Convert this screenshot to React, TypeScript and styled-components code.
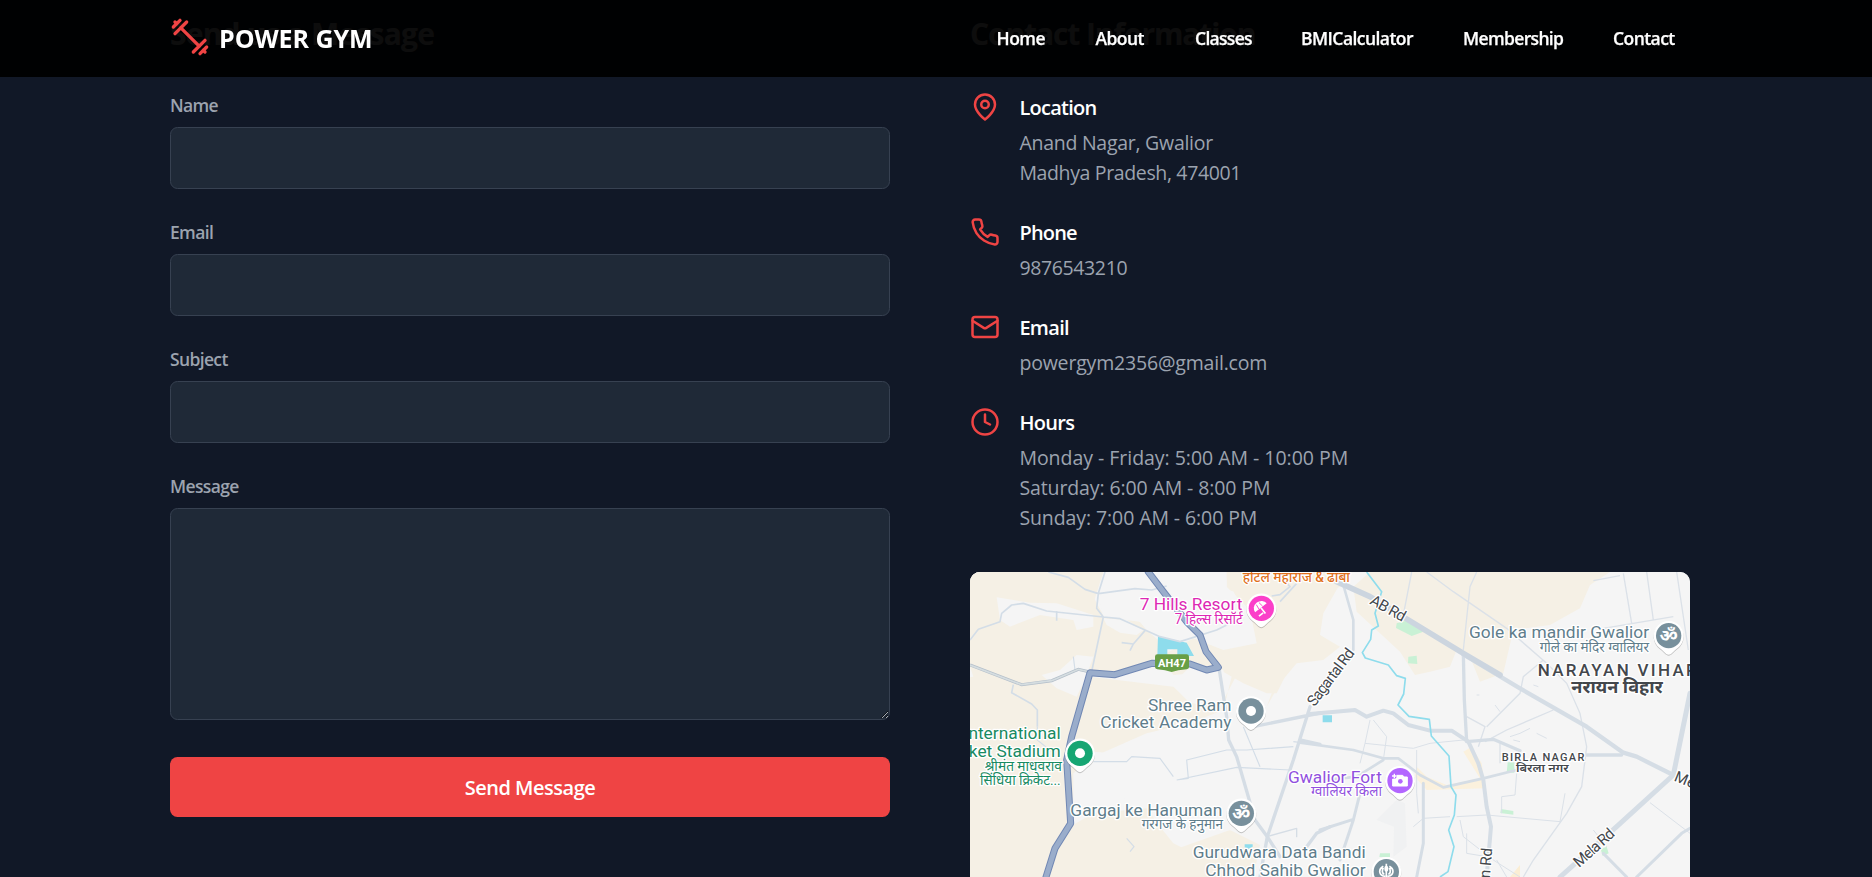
import React from 'react';
import styled, { createGlobalStyle } from 'styled-components';

const GlobalStyle = createGlobalStyle`
  *, *::before, *::after { box-sizing: border-box; }
  html, body { margin: 0; padding: 0; background: #111827; }
  body { font-family: "Segoe UI", "Open Sans", "Noto Sans", sans-serif; font-size: 20px; line-height: 30px; color: #fff; }
  h2, h3, p { margin: 0; }
`;

const Page = styled.div`
  width: 1860px;
  height: 877px;
  overflow: hidden;
`;

const Header = styled.header`
  position: fixed;
  top: 0;
  left: 0;
  right: 0;
  z-index: 10;
  height: 77px;
  background: rgba(0, 0, 0, 0.95);
`;

const HeaderInner = styled.div`
  width: 1506px;
  height: 100%;
  margin-left: 170px;
  display: flex;
  align-items: center;
  justify-content: space-between;
`;

const Logo = styled.div`
  display: flex;
  align-items: center;
  gap: 9px;
  padding-bottom: 2px;
  font-size: 25px;
  font-weight: 700;
  letter-spacing: -0.05px;
  color: #fff;

  svg { margin-bottom: 1px; }
`;

const Nav = styled.nav`
  display: flex;
  gap: 50px;
`;

const NavLink = styled.a<{ $width: number; $track: number }>`
  width: ${(p) => p.$width}px;
  letter-spacing: ${(p) => p.$track}px;
  font-size: 17.5px;
  line-height: 25px;
  font-weight: 600;
  color: #fff;
  white-space: nowrap;
  -webkit-text-stroke: 0.25px #fff;
`;

const Main = styled.main`
  width: 1520px;
  margin: 0 auto;
  padding-top: 12px;
  display: grid;
  grid-template-columns: 720px 720px;
  gap: 80px;
  justify-content: start;
`;

const Section = styled.section`
  display: flex;
  flex-direction: column;
`;

const Heading = styled.h2<{ $track: number }>`
  padding-top: 2px;
  margin-bottom: 38px;
  font-size: 30px;
  line-height: 40px;
  font-weight: 700;
  letter-spacing: ${(p) => p.$track}px;
`;

const Form = styled.form`
  display: flex;
  flex-direction: column;
  gap: 30px;
`;

const Field = styled.div`
  display: flex;
  flex-direction: column;
  gap: 9px;
`;

const Label = styled.label`
  padding-top: 1px;
  font-size: 17.5px;
  line-height: 25px;
  font-weight: 600;
  letter-spacing: -0.65px;
  color: #9ca3af;
`;

const Input = styled.input`
  height: 62px;
  padding: 15px 20px;
  border: 1px solid #374151;
  border-radius: 7.5px;
  background: #1f2937;
  color: #fff;
  font: inherit;
  outline: none;
`;

const TextArea = styled.textarea`
  height: 212px;
  margin-bottom: 7px;
  padding: 15px 20px;
  border: 1px solid #374151;
  border-radius: 7.5px;
  background: #1f2937;
  color: #fff;
  font: inherit;
  outline: none;
  resize: vertical;
`;

const SubmitButton = styled.button`
  height: 60px;
  padding: 2px 0 0;
  border: 0;
  border-radius: 7.5px;
  background: #ef4444;
  color: #fff;
  font: inherit;
  font-weight: 600;
  letter-spacing: -0.5px;
`;

const InfoList = styled.div`
  display: flex;
  flex-direction: column;
  gap: 30px;
  margin-bottom: 40px;
`;

const InfoItem = styled.div`
  display: flex;
  align-items: flex-start;
  gap: 19.4px;
`;

const InfoText = styled.div`
  padding-top: 1px;
  margin-bottom: -1px;
`;

const InfoIcon = styled.svg`
  width: 30px;
  height: 30px;
  flex: none;
  fill: none;
  stroke: #ef4444;
  stroke-width: 2;
  stroke-linecap: round;
  stroke-linejoin: round;
`;

const InfoTitle = styled.h3<{ $track: number }>`
  margin-bottom: 5px;
  font-size: 20px;
  line-height: 30px;
  font-weight: 600;
  letter-spacing: ${(p) => p.$track}px;
`;

const InfoLine = styled.p<{ $track: number }>`
  font-size: 19.5px;
  line-height: 30px;
  letter-spacing: ${(p) => p.$track}px;
  color: #9ca3af;
  white-space: nowrap;
`;

const MapFrame = styled.div`
  height: 305px;
  border-radius: 10px 10px 0 0;
  overflow: hidden;
  background: #f5f5f5;

  svg { display: block; }
  text { font-family: Roboto, "Noto Sans Devanagari", "Noto Sans", sans-serif; }
`;

const MapLabel = styled.text<{ $size?: number; $weight?: number }>`
  font-size: ${(p) => p.$size ?? 52}px;
  font-weight: ${(p) => p.$weight ?? 400};
  paint-order: stroke;
  stroke: #fff;
  stroke-width: 8px;
  stroke-linejoin: round;
  text-anchor: end;
`;

const navItems = [
  { text: 'Home', width: 49, track: -0.5 },
  { text: 'About', width: 49.5, track: -0.55 },
  { text: 'Classes', width: 56, track: -0.7 },
  { text: 'BMICalculator', width: 112, track: -0.55 },
  { text: 'Membership', width: 100, track: -0.65 },
  { text: 'Contact', width: 63, track: -0.55 },
];

type Info = {
  title: string;
  track: number;
  icon: React.ReactNode;
  lines: [string, number][];
};

const infos: Info[] = [
  {
    title: 'Location',
    track: -0.75,
    icon: (
      <>
        <path d="M20 10c0 6-8 12-8 12s-8-6-8-12a8 8 0 0 1 16 0Z" />
        <circle cx="12" cy="10" r="3" />
      </>
    ),
    lines: [['Anand Nagar, Gwalior', -0.26], ['Madhya Pradesh, 474001', -0.36]],
  },
  {
    title: 'Phone',
    track: -0.8,
    icon: (
      <path d="M22 16.92v3a2 2 0 0 1-2.18 2 19.79 19.79 0 0 1-8.63-3.07 19.5 19.5 0 0 1-6-6 19.79 19.79 0 0 1-3.07-8.67A2 2 0 0 1 4.11 2h3a2 2 0 0 1 2 1.72 12.84 12.84 0 0 0 .7 2.81 2 2 0 0 1-.45 2.11L8.09 9.91a16 16 0 0 0 6 6l1.27-1.27a2 2 0 0 1 2.11-.45 12.84 12.84 0 0 0 2.81.7A2 2 0 0 1 22 16.92z" />
    ),
    lines: [['9876543210', -0.37]],
  },
  {
    title: 'Email',
    track: -0.7,
    icon: (
      <>
        <rect width="20" height="16" x="2" y="4" rx="2" />
        <path d="m22 7-8.97 5.7a1.94 1.94 0 0 1-2.06 0L2 7" />
      </>
    ),
    lines: [['powergym2356@gmail.com', -0.18]],
  },
  {
    title: 'Hours',
    track: -0.7,
    icon: (
      <>
        <circle cx="12" cy="12" r="10" />
        <polyline points="12 6 12 12 16 14" />
      </>
    ),
    lines: [
      ['Monday - Friday: 5:00 AM - 10:00 PM', -0.03],
      ['Saturday: 6:00 AM - 8:00 PM', -0.11],
      ['Sunday: 7:00 AM - 6:00 PM', -0.09],
    ],
  },
];

function DumbbellIcon() {
  return (
    <svg width="40" height="40" viewBox="0 0 24 24" fill="none" stroke="#ef4444" strokeWidth="2" strokeLinecap="round" strokeLinejoin="round">
      <path d="m6.5 6.5 11 11" />
      <path d="m21 21-1-1" />
      <path d="m3 3 1 1" />
      <path d="m18 22 4-4" />
      <path d="m2 6 4-4" />
      <path d="m3 10 7-7" />
      <path d="m14 21 7-7" />
    </svg>
  );
}

function Pin({ x, y, color, children }: { x: number; y: number; color: string; children?: React.ReactNode }) {
  const shape = 'M0 57C-8 57-14 46-28 36A45 45 0 1 1 28 36C14 46 8 57 0 57Z';
  return (
    <g transform={`translate(${x} ${y})`}>
      <path d={shape} transform="translate(0 3)" fill="#000" opacity="0.22" />
      <path d={shape} fill="#fff" />
      <circle r="38" fill={color} />
      {children ?? <circle r="15" fill="#fff" />}
    </g>
  );
}

const Om = () => (
  <text y="19" fontSize="54" fontWeight="700" fill="#fff" textAnchor="middle">ॐ</text>
);

function CityMap() {
  const highway = 'M565 36 610 95 680 185 720 225 738 275 775 322 740 330 690 312 575 310 465 344 390 338 335 530 320 600 332 790 285 865 258 951';
  return (
    <svg width="720" height="305" viewBox="30 36 2160 915">
      <rect x="30" y="36" width="2160" height="915" fill="#f5f5f5" />

      {/* terrain */}
      <g fill="#f5f0e5">
        <path d="M30 36H420L385 75 410 130 430 165 530 175 560 210 600 245 590 290 470 330 400 330 380 345 250 345 290 375 380 380 350 530 400 575 440 578 500 545 600 510 690 490 790 450 820 330 640 345 600 290 690 240 790 190 880 180 850 100 800 90 800 36H1160L1090 160 1080 225 1140 260 1090 300 1010 310 960 370 935 400 920 440 960 370 830 345 780 440 690 430 640 380 500 420 400 570 350 640 330 800 400 760 560 745 600 800 640 850 700 880 770 951H30Z" />
        <path d="M30 36H430L400 130 340 100 320 180 200 150 120 175 30 240Z" />
        <path d="M430 170 520 190 590 250 580 300 460 340 400 330Z" />
        <path d="M790 36H1160V70L1080 110 1060 165 1080 225 1130 260 1085 300 1000 300 950 400 920 400 850 370 780 330 790 270 890 260 860 170Z" />
        <path d="M390 350 640 380 690 430 770 440 700 485 560 520 440 575 380 570 330 600Z" />
        <path d="M810 810 900 855 880 951H690L640 870Z" />
      </g>
      <g fill="#f5f5f5">
        <path d="M110 112 210 128 290 130 400 165 400 200 350 210 340 180 240 165 150 200 120 180Z" />
        <path d="M430 175 500 180 550 210 530 225 480 218 440 195Z" />
        <path d="M245 345 300 330 350 285 400 290 380 345 350 410 290 385Z" />
        <path d="M560 36 800 36 800 80 870 150 890 250 790 270 700 235 600 225 570 190 430 170 415 110Z" />
        <path d="M640 370 690 320 790 330 800 400 720 420Z" />
        <path d="M400 590 560 520 690 490 830 490 960 560 960 850 860 815 700 800 600 730 480 715 340 730 340 640Z" />
        <path d="M30 320 40 350 30 352Z" />
      </g>
      <g transform="translate(1080 0)">
        <path d="M100 80 150 36H870L810 75 780 145 690 195 580 210 550 340 480 365 450 290 410 270 390 320 330 335 285 345 240 275 180 220 110 155ZM-70 36H90L60 70 0 150-40 110Z" fill="#f5f0e5" />
        <path d="M430 150 520 160 550 230 500 270 440 255ZM180 36H320L270 110 180 80Z" fill="#f5f0e5" />
        <path d="M430 575 455 560 485 610 495 685 320 690 285 650 290 620 320 650 380 675 480 655Z" fill="#fbf1dd" />
        <path d="M570 951 600 915V951Z" fill="#fbeed4" />
        <g fill="#c9f1d5">
          <path d="M230 190 258 182 310 215 275 228 228 204Z" />
          <path d="M265 290 290 287 292 312 264 310Z" />
          <path d="M563 607H583V638H560ZM543 747 580 753V764L541 759ZM180 880H210V891H178ZM842 868 860 860 866 880 848 888Z" />
        </g>
        <path d="M230 720 255 730 260 860 220 890 222 800 170 780 200 750Z" fill="#f0f1f2" />
      </g>

      {/* water */}
      <path d="M594 228 680 248 702 288H652V268H622V288H592ZM1088 466H1116V487H1088ZM854 853H878V860L866 867 854 862Z" fill="#8edcec" />

      {/* minor streets */}
      <g fill="none" stroke="#d3dde7" strokeWidth="5" strokeLinejoin="round">
        <path d="M265 36 325 52 375 88 415 101 525 86 575 90 620 78M435 36 415 100 410 145 430 171 396 330M30 240 55 208 120 185 125 160 155 135 190 130 260 153 430 171 480 176 600 230 660 245 770 210 830 180M290 153V182M485 248 520 252 555 212M520 252 510 272M160 374 155 398 215 432 232 450V500" />
        <path d="M950 36 990 80 960 104 935 108M1010 70 960 125" />
        <path d="M232 500 232 540 275 575M400 605 500 605 515 590 600 595 640 650M650 660 685 655 680 600 800 570 860 570 1000 560M650 660 830 622 990 630M850 500 900 620M1000 545 1080 555M500 835 522 860 510 875M340 290 345 330" strokeWidth="3.5" />
      </g>
      <g transform="translate(1080 0)" fill="none" stroke="#dbe1e8" strokeWidth="4">
        <path d="M275 36 250 165M320 36 400 95 560 205 680 310 740 370 780 460 800 560 785 680 740 760 640 900 610 951M820 62 900 47M910 40 935 190M980 36 1000 180M1070 36 1105 270M850 205 1060 170M430 270 450 80 470 36M440 470 495 500 475 560M500 500 600 400 610 350 670 300M700 450 560 510 495 545M540 550V610" />
        <path d="M150 480 135 550 280 565 330 550 430 540M160 480 200 530 190 600M135 550 120 610M290 570V700L295 760M390 770 310 775 280 800M410 770 500 765 720 785M420 780 430 830 520 900 600 951M590 640 585 705 545 710 545 760M720 785 735 700M440 820V880L500 890M530 900 560 951M990 728 1110 820M820 810 860 860" strokeWidth="3" />
        <path d="M570 530 600 520 630 505M580 540 600 545M650 520 680 535M470 405H478M525 435 540 455M640 375 655 380" strokeWidth="3" />
      </g>

      {/* main roads */}
      <g fill="none" stroke="#d5dde5" strokeLinecap="round" strokeLinejoin="round">
        <path d="M778 330 800 470 806 540 830 590 865 710 885 780 922 830" strokeWidth="10" />
        <path d="M880 500 1080 459M922 830 1000 600 1050 440M1020 540 1080 553M922 830 900 951M922 830 960 890M1040 860 1070 820 1110 800" strokeWidth="10" />
        <path d="M920 830 1010 805 1010 830" strokeWidth="4" />
        <g transform="translate(1080 0)">
          <path d="M-30 462 105 450 140 470 190 452 220 460 265 495 330 512H395L445 545 475 610 490 660 500 740 513 800 500 951" strokeWidth="12" />
          <path d="M430 280 433 420 440 545 520 538 600 572M800 585H905" strokeWidth="10" />
          <path d="M70 75 100 180V270M-60 548 100 570 190 595 235 595 300 645 370 682 490 655 590 630M190 600 110 650-20 665" strokeWidth="8" />
          <path d="M430 283 600 385 800 500 910 578 950 590 1060 645" strokeWidth="13" />
          <path d="M50 65 150 110 430 280 540 345" strokeWidth="17" stroke="#ccd5df" />
          <path d="M1060 645 1110 400M1060 645 890 800 720 951" strokeWidth="15" />
          <path d="M850 880 920 951M950 951 1085 820 1110 805M120 700 100 780 60 900M0 810 100 778M310 670V850L290 951" strokeWidth="9" />
        </g>
      </g>
      <path d="M30 315 185 374 275 362 355 328 390 336" fill="none" stroke="#b4bfca" strokeWidth="9" />
      <path d="M30 315 185 374 275 362 355 328 390 336" fill="none" stroke="#d5dde0" strokeWidth="5" />
      <path d="M1220 36 1265 95 1245 160 1255 198 1235 210 1232 238 1207 278 1216 294 1285 315 1310 347 1336 355 1331 402 1314 435 1347 469 1408 478 1414 528 1467 588 1473 680 1488 705 1483 765 1466 810 1482 860 1464 935 1440 951" fill="none" stroke="#8edcec" strokeWidth="5" strokeLinejoin="round" />

      {/* highway */}
      <g fill="none" strokeLinejoin="round" strokeLinecap="round">
        <path d={highway} stroke="#7188b4" strokeWidth="21" />
        <path d={highway} stroke="#9aadcb" strokeWidth="15" />
      </g>
      <path d="M592 283H680Q687 283 687 290V321Q687 327 680 328L655 331 635 336 615 331 592 328Q585 327 585 321V290Q585 283 592 283Z" fill="#689f46" />
      <text x="636" y="322" fontSize="33" fontWeight="700" fill="#fff" textAnchor="middle" textLength="84">AH47</text>

      {/* place pins */}
      <Pin x={904} y={145} color="#fb3fc9">
        <g transform="rotate(-38)" fill="#fff">
          <path d="M-22-2A22 20 0 0 1 22-2Z" />
          <path d="M0-2V20M-20 14H-4" fill="none" stroke="#fff" strokeWidth="5" />
          <path d="M-7-3-5-18M7-3 5-18" stroke="#fb3fc9" strokeWidth="2.5" />
        </g>
      </Pin>
      <Pin x={873} y={453} color="#78909c" />
      <Pin x={360} y={580} color="#17a673" />
      <Pin x={844} y={760} color="#78909c"><Om /></Pin>
      <Pin x={2126} y={227} color="#78909c"><Om /></Pin>
      <Pin x={1320} y={662} color="#b366ff">
        <path d="M-12-16H8L13-11H22V16H-22V-5H-12Z" fill="#fff" stroke="#fff" strokeWidth="3" />
        <path d="M-24-14H-10M-17-21V-7" stroke="#b366ff" strokeWidth="9" />
        <path d="M-24-14H-10M-17-21V-7" stroke="#fff" strokeWidth="4" />
        <circle r="7" cy="2" cx="1" fill="#b366ff" />
      </Pin>
      <Pin x={1279} y={935} color="#78909c">
        <ellipse rx="6" ry="9" cy="-9" fill="#fff" />
        <path d="M0-24V18M-9-16C-26-6-22 12-3 14M9-16C26-6 22 12 3 14M-9-12C-14-2-12 6-6 8M9-12C14-2 12 6 6 8" fill="none" stroke="#fff" strokeWidth="5" />
      </Pin>

      {/* place names */}
      <g fill="#dd28b4">
        <MapLabel x="847" y="151" textLength="308">7 Hills Resort</MapLabel>
        <MapLabel x="848" y="192" $size={43} textLength="204" lengthAdjust="spacingAndGlyphs">7 हिल्स रिसॉर्ट</MapLabel>
      </g>
      <MapLabel x="1170" y="66" $size={43} $weight={500} textLength="322" lengthAdjust="spacingAndGlyphs" fill="#e0701c">होटल महाराज &amp; ढाबा</MapLabel>
      <g fill="#607d8b">
        <MapLabel x="814" y="453" textLength="250">Shree Ram</MapLabel>
        <MapLabel x="814" y="505" textLength="393">Cricket Academy</MapLabel>
        <MapLabel x="787" y="767" textLength="456">Gargaj ke Hanuman</MapLabel>
        <MapLabel x="789" y="808" $size={43} textLength="244" lengthAdjust="spacingAndGlyphs">गरगज के हनुमान</MapLabel>
        <MapLabel x="1217" y="895" textLength="519">Gurudwara Data Bandi</MapLabel>
        <MapLabel x="1217" y="947" textLength="481">Chhod Sahib Gwalior</MapLabel>
        <MapLabel x="2067" y="234" textLength="540">Gole ka mandir Gwalior</MapLabel>
        <MapLabel x="2067" y="275" $size={43} textLength="328" lengthAdjust="spacingAndGlyphs">गोले का मंदिर ग्वालियर</MapLabel>
      </g>
      <g fill="#188a62">
        <MapLabel x="302" y="538">International</MapLabel>
        <MapLabel x="302" y="590">Cricket Stadium</MapLabel>
        <MapLabel x="306" y="633" $size={43} textLength="232" lengthAdjust="spacingAndGlyphs">श्रीमंत माधवराव</MapLabel>
        <MapLabel x="302" y="675" $size={43} textLength="242" lengthAdjust="spacingAndGlyphs">सिंधिया क्रिकेट...</MapLabel>
      </g>
      <g fill="#9150de">
        <MapLabel x="1266" y="669" textLength="282">Gwalior Fort</MapLabel>
        <MapLabel x="1266" y="709" $size={43} textLength="213" lengthAdjust="spacingAndGlyphs">ग्वालियर किला</MapLabel>
      </g>

      {/* districts and streets */}
      <g fill="#43474c">
        <MapLabel $size={51} $weight={500} x="2210" y="347" textLength="477">NARAYAN VIHAR</MapLabel>
        <MapLabel $size={51} $weight={700} x="2108" y="398" textLength="274" lengthAdjust="spacingAndGlyphs">नरायन विहार</MapLabel>
        <MapLabel $size={33} $weight={500} x="1873" y="603" textLength="248">BIRLA NAGAR</MapLabel>
        <MapLabel $size={35} $weight={600} x="1826" y="636" textLength="158" lengthAdjust="spacingAndGlyphs">बिरला नगर</MapLabel>
        <MapLabel $size={46} transform="translate(1327 186) rotate(29)" textLength="114">AB Rd</MapLabel>
        <MapLabel $size={46} transform="translate(1186 279) rotate(-53)" textLength="204">Sagartal Rd</MapLabel>
        <MapLabel $size={46} transform="translate(1967 825) rotate(-42)" textLength="148">Mela Rd</MapLabel>
        <MapLabel $size={46} transform="translate(1597 865) rotate(-85)">Station Rd</MapLabel>
        <MapLabel $size={46} transform="translate(2294 724) rotate(22)">Mela Rd</MapLabel>
      </g>
    </svg>
  );
}

const fields = ['Name', 'Email', 'Subject'];

export default function App() {
  return (
    <Page>
      <GlobalStyle />
      <Header>
        <HeaderInner>
          <Logo>
            <DumbbellIcon />
            POWER GYM
          </Logo>
          <Nav>
            {navItems.map((n) => (
              <NavLink key={n.text} $width={n.width} $track={n.track}>{n.text}</NavLink>
            ))}
          </Nav>
        </HeaderInner>
      </Header>
      <Main>
        <Section>
          <Heading $track={-0.8}>Send us a Message</Heading>
          <Form>
            {fields.map((f) => (
              <Field key={f}>
                <Label>{f}</Label>
                <Input type="text" />
              </Field>
            ))}
            <Field>
              <Label>Message</Label>
              <TextArea />
            </Field>
            <SubmitButton type="button">Send Message</SubmitButton>
          </Form>
        </Section>
        <Section>
          <Heading $track={-1.1}>Contact Information</Heading>
          <InfoList>
            {infos.map((info) => (
              <InfoItem key={info.title}>
                <InfoIcon viewBox="0 0 24 24">{info.icon}</InfoIcon>
                <InfoText>
                  <InfoTitle $track={info.track}>{info.title}</InfoTitle>
                  {info.lines.map(([text, track]) => (
                    <InfoLine key={text} $track={track}>{text}</InfoLine>
                  ))}
                </InfoText>
              </InfoItem>
            ))}
          </InfoList>
          <MapFrame>
            <CityMap />
          </MapFrame>
        </Section>
      </Main>
    </Page>
  );
}
